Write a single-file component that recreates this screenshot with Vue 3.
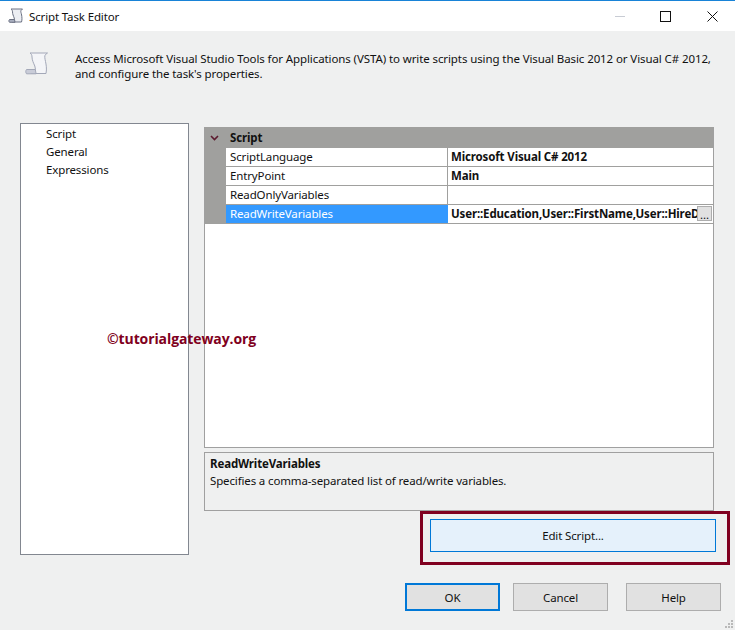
<script setup>
const items = ['Script', 'General', 'Expressions']
const rows = [
  { name: 'ScriptLanguage', value: 'Microsoft Visual C# 2012' },
  { name: 'EntryPoint', value: 'Main' },
  { name: 'ReadOnlyVariables', value: '' },
  { name: 'ReadWriteVariables', value: 'User::Education,User::FirstName,User::HireD', active: true }
]
</script>

<template>
  <div class="dialog">
    <header class="titlebar">
      <svg class="title-icon" width="16" height="16" viewBox="0 0 16 16">
        <path d="M3 1h11.500l-1.500 1.500c-.6 1 .3 2.500.6 4.500s.7 4.500-.1 7H4l-.5-2.500h3L6.200 10C5.500 8 4.500 6 4.500 4c0-1.200-.3-2-1.500-3z" fill="#eceef3" stroke="#6b7183"/>
        <path d="M1.500 11.500h5l.5 2.800H1.500c-.8-.7-.8-2.100 0-2.800z" fill="#aab0c0" stroke="#6b7183"/>
      </svg>
      <span class="title">Script Task Editor</span>
      <div class="win-buttons">
        <span class="win-min"></span>
        <span class="win-max"></span>
        <svg class="win-close" width="11" height="11" viewBox="0 0 11 11"><path d="M.5.5l10 10M10.500.5l-10 10" stroke="#111" fill="none"/></svg>
      </div>
    </header>

    <section class="intro">
      <svg class="intro-icon" width="24" height="24" viewBox="0 0 24 24">
        <path d="M5 1h17.500l-2 1.500c-1.300 1.300-.6 4 0 7s1.500 7 .5 12H6l-.7-4h5.200l-.7-3.500C8.500 11 7 8 7 5c0-1.800-.5-3-2-4z" fill="#f4f5f8" stroke="#a3a8b8"/>
        <path d="M1.500 17.500h8.800l.8 4.300H1.500c-1-1.300-1-3 0-4.300z" fill="#c9ccd8" stroke="#a3a8b8"/>
      </svg>
      <p class="intro-text">Access Microsoft Visual Studio Tools for Applications (VSTA) to write scripts using the Visual Basic 2012 or Visual C# 2012,<br>and configure the task's properties.</p>
    </section>

    <main class="content">
      <ul class="nav">
        <li v-for="item in items" :key="item">{{ item }}</li>
      </ul>

      <div class="right">
        <div class="grid">
          <div class="group">
            <svg class="chevron" width="9" height="6" viewBox="0 0 9 6"><path d="M1 1l3.500 3.500L8 1" fill="none" stroke="#5c1a2e" stroke-width="1.600"/></svg>
            <span>Script</span>
          </div>
          <div v-for="row in rows" :key="row.name" class="row" :class="{ active: row.active }">
            <div class="gutter"></div>
            <div class="name">{{ row.name }}</div>
            <div class="value">
              <span class="value-text">{{ row.value }}</span>
              <span v-if="row.active" class="ellipsis">...</span>
            </div>
          </div>
        </div>

        <div class="desc">
          <strong>ReadWriteVariables</strong>
          <span>Specifies a comma-separated list of read/write variables.</span>
        </div>

        <div class="edit-wrap">
          <div class="edit-frame">
            <button class="edit">Edit Script...</button>
          </div>
        </div>
      </div>
    </main>

    <footer class="actions">
      <button class="btn primary">OK</button>
      <button class="btn">Cancel</button>
      <button class="btn help">Help</button>
    </footer>

    <div class="watermark">©tutorialgateway.org</div>
    <svg class="grip" width="8" height="8" viewBox="0 0 8 8"><path d="M6 0h2v2H6zM3 3h2v2H3zM6 3h2v2H6zM0 6h2v2H0zM3 6h2v2H3zM6 6h2v2H6z" fill="#b9b9b9"/></svg>
  </div>
</template>

<style scoped>
.dialog {
  position: relative;
  width: 735px;
  height: 630px;
  overflow: hidden;
  background: #eff0f0;
  color: #111;
  font-family: "Noto Sans", "Open Sans", sans-serif;
  font-size: 11.5px;
  letter-spacing: -0.14px;
  box-sizing: border-box;
  display: flex;
  flex-direction: column;
}
.titlebar {
  height: 31px;
  flex: none;
  display: flex;
  align-items: center;
  box-sizing: border-box;
  background: #fff;
  border-top: 1px solid #1883d7;
  padding-left: 8px;
}
.title { margin-left: 5px; }
.win-buttons {
  margin-left: auto;
  display: flex;
  align-items: center;
  padding-right: 17px;
}
.win-min { width: 10px; height: 1px; background: #c8ccd4; margin-right: 35px; }
.win-max { width: 9px; height: 9px; border: 1px solid #111; margin-right: 36px; box-sizing: content-box; }
.intro {
  height: 92px;
  flex: none;
  display: flex;
  padding: 20px 0 0 25px;
  box-sizing: border-box;
}
.intro-icon { flex: none; margin-top: 1px; }
.intro-text { margin: 0 0 0 26px; line-height: 15px; white-space: nowrap; letter-spacing: -0.1px; }
.content {
  flex: none;
  display: flex;
  padding-left: 20px;
  align-items: flex-start;
}
.nav {
  width: 169px;
  height: 432px;
  margin: 0;
  padding: 1px 0 0 25px;
  list-style: none;
  box-sizing: border-box;
  background: #fff;
  border: 1px solid #828790;
}
.nav li { height: 18px; line-height: 18px; }
.right { margin-left: 15px; margin-top: 4px; width: 510px; }
.grid {
  height: 321px;
  box-sizing: border-box;
  background: #fff;
  border: 1px solid #a0a0a0;
  border-top: 0;
}
.group {
  height: 21px;
  display: flex;
  align-items: center;
  background: #a0a09e;
  font-weight: 700;
}
.chevron { margin: 0 10px 0 5px; }
.group span { margin-left: 1px; }
.row {
  height: 19px;
  display: flex;
  box-sizing: border-box;
  border-bottom: 1px solid #a0a09e;
  line-height: 18px;
}
.gutter { width: 21px; flex: none; background: #a0a09e; }
.name {
  width: 222px;
  flex: none;
  box-sizing: border-box;
  padding-left: 4px;
  border-right: 1px solid #a0a09e;
}
.value {
  flex: 1;
  min-width: 0;
  display: flex;
  padding-left: 3px;
  font-weight: 700;
}
.value-text { flex: 1; min-width: 0; white-space: nowrap; }
.active .name { background: #3399ff; color: #fff; border-right-color: #3399ff; }
.ellipsis {
  width: 15px;
  height: 15px;
  flex: none;
  margin: 1px 1px 0 0;
  background: #e1e1e1;
  border: 1px solid #adadad;
  box-sizing: border-box;
  font-weight: 400;
  line-height: 15px;
  text-align: center;
}
.desc {
  height: 59px;
  margin-top: 4px;
  box-sizing: border-box;
  border: 1px solid #a0a0a0;
  padding: 2px 5px;
  display: flex;
  flex-direction: column;
  line-height: 17px;
}
.edit-wrap { display: flex; justify-content: flex-end; margin-right: -16px; }
.edit-frame {
  width: 310px;
  height: 54px;
  box-sizing: border-box;
  border: 3px solid #800020;
  padding: 5px 11px 10px 7px;
}
.edit {
  display: block;
  width: 100%;
  height: 100%;
  padding: 0;
  background: #e5f1fb;
  border: 1px solid #0078d7;
  color: #111;
  font: inherit;
  letter-spacing: inherit;
}
.actions {
  display: flex;
  margin-top: 18px;
  padding-left: 405px;
}
.btn {
  width: 95px;
  height: 28px;
  padding: 0;
  box-sizing: border-box;
  margin-right: 13px;
  background: #e1e1e1;
  border: 1px solid #adadad;
  color: #111;
  font: inherit;
  letter-spacing: inherit;
}
.btn.primary { border: 2px solid #0078d7; }
.btn.help { margin-left: 5px; margin-right: 0; }
.watermark {
  position: absolute;
  left: 107px;
  top: 330px;
  color: #800020;
  font-family: "Open Sans", "Noto Sans", sans-serif;
  font-weight: 700;
  font-size: 14px;
  letter-spacing: -0.1px;
  line-height: 18px;
}
.grip { position: absolute; right: 2px; bottom: 2px; }
</style>
